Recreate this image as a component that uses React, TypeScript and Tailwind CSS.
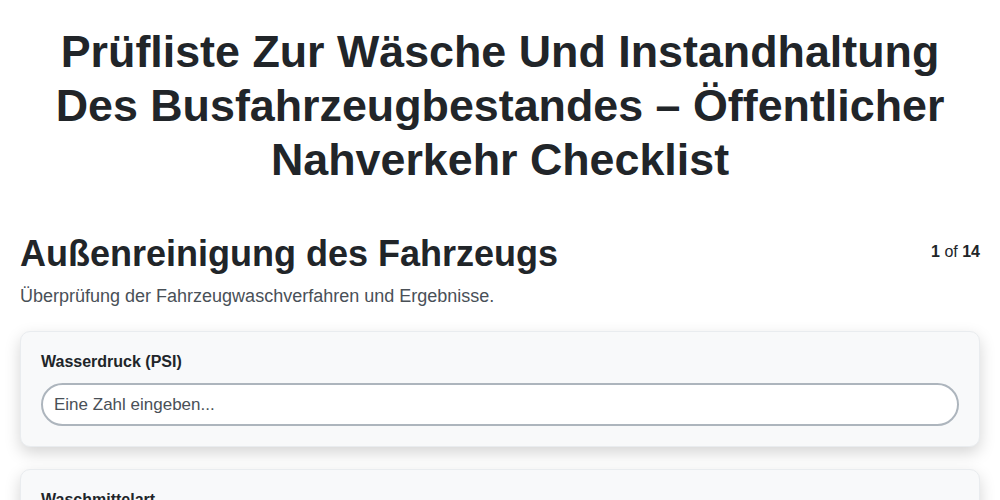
import React from "react";

const App = () => {
  return (
    <div className="min-h-screen bg-white px-5 pt-6 text-[#212529] [font-family:'Liberation_Sans',Arial,sans-serif]">
      {/* Page title */}
      <h1 className="text-center text-[2.8rem] font-bold leading-[54px]">
        Prüfliste Zur Wäsche Und Instandhaltung Des Busfahrzeugbestandes – Öffentlicher Nahverkehr Checklist
      </h1>

      {/* Section header */}
      <div className="mt-[46px] flex items-start justify-between">
        <h2 className="text-[36px] font-bold leading-[43px]">Außenreinigung des Fahrzeugs</h2>
        <div className="pt-2 text-base">
          <span className="font-bold">1</span> of <span className="font-bold">14</span>
        </div>
      </div>
      <p className="mt-2 text-lg leading-[27px] text-[#495057]">
        Überprüfung der Fahrzeugwaschverfahren und Ergebnisse.
      </p>

      {/* Question cards */}
      <div className="mt-[21px] flex flex-col gap-[22px]">
        <div className="rounded-[10px] border border-[#e9ecef] bg-[#f8f9fa] p-5 shadow-[0_6px_16px_rgba(0,0,0,0.17)]">
          <label className="mb-3 block text-base font-bold leading-[1.2]">Wasserdruck (PSI)</label>
          <input
            type="text"
            placeholder="Eine Zahl eingeben..."
            className="h-[43px] w-full rounded-full border-2 border-[#adb5bd] bg-white pl-[11px] pr-2.5 text-[17px] text-[#212529] outline-none placeholder:text-[#495057]"
          />
        </div>
        <div className="rounded-[10px] border border-[#e9ecef] bg-[#f8f9fa] p-5 shadow-[0_6px_16px_rgba(0,0,0,0.17)]">
          <label className="mb-3 block text-base font-bold leading-[1.2]">Waschmittelart</label>
          <input
            type="text"
            placeholder="Text eingeben..."
            className="h-[43px] w-full rounded-full border-2 border-[#adb5bd] bg-white pl-[11px] pr-2.5 text-[17px] text-[#212529] outline-none placeholder:text-[#495057]"
          />
        </div>
      </div>
    </div>
  );
};

export default App;
